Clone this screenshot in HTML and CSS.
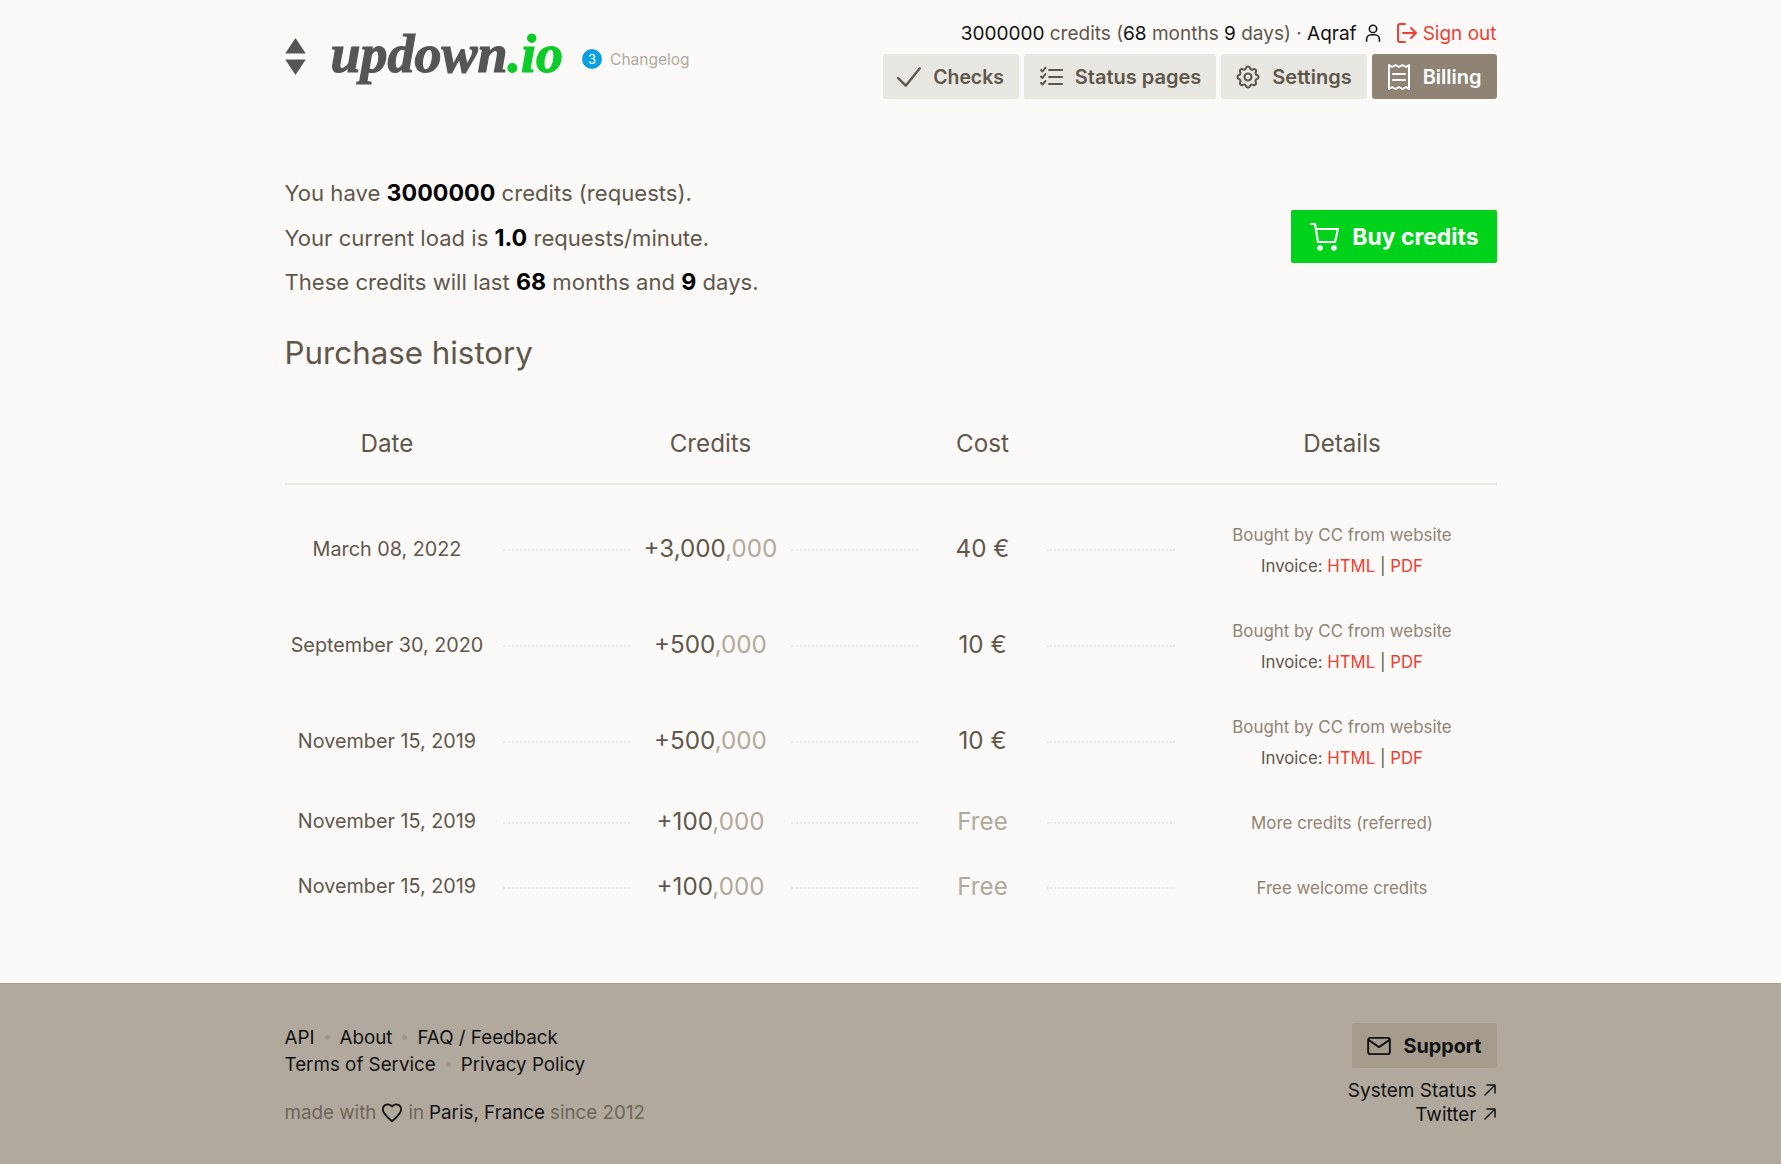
FILE: index.html
```html
<!DOCTYPE html>
<html lang="en">
<head>
<meta charset="utf-8">
<title>updown.io - Billing</title>
<link rel="stylesheet" href="styles.css">
</head>
<body>
<div class="page">
  <header class="header">
    <div class="brand">
      <svg class="brand-arrows" viewBox="0 0 20 36" width="21" height="37"><path d="M10 0 L20 15 H0 Z M0 21 H20 L10 36 Z" fill="#555"/></svg>
      <a class="logo">updown<span class="logo-tld">.io</span></a>
      <a class="changelog"><span class="badge">3</span>Changelog</a>
    </div>
    <div class="header-right">
      <div class="account">
        <span><b class="dark">3000000</b> credits (<b class="dark">68</b> months <b class="dark">9</b> days) · <b class="dark">Aqraf</b></span>
        <svg class="ico-user" viewBox="0 0 24 24" width="22" height="22" fill="none" stroke="#111" stroke-width="1.700" stroke-linecap="round" stroke-linejoin="round"><circle cx="12" cy="7.500" r="4"/><path d="M5 21v-2a5 5 0 0 1 5-5h4a5 5 0 0 1 5 5v2"/></svg>
        <a class="signout"><svg viewBox="0 0 24 24" width="24" height="24" fill="none" stroke="#f03e33" stroke-width="2" stroke-linecap="round" stroke-linejoin="round"><path d="M10 3H5a2 2 0 0 0-2 2v14a2 2 0 0 0 2 2h5"/><path d="M8 12h13M16 7l5 5-5 5"/></svg>Sign out</a>
      </div>
      <nav class="nav">
        <a class="nav-btn nav-btn-check"><svg viewBox="0 0 24 24" width="26" height="28" fill="none" stroke="#5f574b" stroke-width="2.200" stroke-linecap="round" stroke-linejoin="round"><path d="M2 13l7 7L22 4"/></svg>Checks</a>
        <a class="nav-btn"><svg viewBox="0 0 28 28" width="28" height="28" fill="none" stroke="#5f574b" stroke-width="2" stroke-linecap="round" stroke-linejoin="round"><path d="M4 7l1.500 1.500L8.500 4.500M4 13.500l1.500 1.500L8.500 11M4 20l1.500 1.500L8.500 18M12 7h13M12 14h13M12 21h13"/></svg>Status pages</a>
        <a class="nav-btn"><svg viewBox="0 0 24 24" width="28" height="28" fill="none" stroke="#5f574b" stroke-width="1.800" stroke-linecap="round" stroke-linejoin="round"><path d="M10.300 4.300c.4-1.800 3-1.800 3.400 0a1.700 1.700 0 0 0 2.600 1.100c1.500-.9 3.300.8 2.400 2.400a1.700 1.700 0 0 0 1 2.500c1.800.4 1.800 3 0 3.400a1.700 1.700 0 0 0-1 2.600c.9 1.500-.9 3.300-2.400 2.400a1.700 1.700 0 0 0-2.600 1c-.4 1.800-3 1.800-3.400 0a1.700 1.700 0 0 0-2.600-1c-1.500.9-3.300-.9-2.400-2.400a1.700 1.700 0 0 0-1-2.600c-1.800-.4-1.800-3 0-3.400a1.700 1.700 0 0 0 1-2.500c-.9-1.600.9-3.300 2.400-2.400 1 .6 2.300.1 2.600-1.100z"/><circle cx="12" cy="12" r="3"/></svg>Settings</a>
        <a class="nav-btn nav-btn-active"><svg viewBox="0 0 28 28" width="28" height="28" fill="none" stroke="#fff" stroke-width="2" stroke-linecap="round" stroke-linejoin="round"><path d="M4 26V2l3 2 3.500-2L14 4l3.500-2L21 4l3-2v24l-3-2-3.500 2L14 24l-3.500 2L7 24z"/><path d="M8 11h12M8 17h12"/></svg>Billing</a>
      </nav>
    </div>
  </header>

  <section class="summary">
    <div class="summary-text">
      <p>You have <b>3000000</b> credits (requests).</p>
      <p>Your current load is <b>1.0</b> requests/minute.</p>
      <p>These credits will last <b>68</b> months and <b>9</b> days.</p>
    </div>
    <a class="buy"><svg viewBox="0 0 32 32" width="32" height="32" fill="none" stroke="#fff" stroke-width="2.200" stroke-linecap="round" stroke-linejoin="round"><path d="M2 3h4l3 18h17l3-13H7"/><circle cx="11" cy="27" r="1.700" fill="#fff"/><circle cx="25" cy="27" r="1.700" fill="#fff"/></svg>Buy credits</a>
  </section>

  <h2 class="title">Purchase history</h2>

  <div class="table">
    <div class="row row-head">
      <div class="c-date">Date</div><div></div><div class="c-num">Credits</div><div></div><div class="c-num">Cost</div><div></div><div class="c-det">Details</div>
    </div>
    <div class="row row-tall">
      <div class="c-date">March 08, 2022</div><i class="dots"></i><div class="c-num">+3,000<span class="mute">,000</span></div><i class="dots"></i><div class="c-num">40 €</div><i class="dots"></i>
      <div class="c-det"><div class="det-note">Bought by CC from website</div><div class="det-inv">Invoice: <a>HTML</a> | <a>PDF</a></div></div>
    </div>
    <div class="row row-tall">
      <div class="c-date">September 30, 2020</div><i class="dots"></i><div class="c-num">+500<span class="mute">,000</span></div><i class="dots"></i><div class="c-num">10 €</div><i class="dots"></i>
      <div class="c-det"><div class="det-note">Bought by CC from website</div><div class="det-inv">Invoice: <a>HTML</a> | <a>PDF</a></div></div>
    </div>
    <div class="row row-tall">
      <div class="c-date">November 15, 2019</div><i class="dots"></i><div class="c-num">+500<span class="mute">,000</span></div><i class="dots"></i><div class="c-num">10 €</div><i class="dots"></i>
      <div class="c-det"><div class="det-note">Bought by CC from website</div><div class="det-inv">Invoice: <a>HTML</a> | <a>PDF</a></div></div>
    </div>
    <div class="row row-short">
      <div class="c-date">November 15, 2019</div><i class="dots"></i><div class="c-num">+100<span class="mute">,000</span></div><i class="dots"></i><div class="c-num mute">Free</div><i class="dots"></i>
      <div class="c-det"><div class="det-note">More credits (referred)</div></div>
    </div>
    <div class="row row-short">
      <div class="c-date">November 15, 2019</div><i class="dots"></i><div class="c-num">+100<span class="mute">,000</span></div><i class="dots"></i><div class="c-num mute">Free</div><i class="dots"></i>
      <div class="c-det"><div class="det-note">Free welcome credits</div></div>
    </div>
  </div>
</div>

<footer class="footer">
  <div class="footer-in">
    <div class="foot-left">
      <div class="foot-links"><a>API</a><i class="sep"></i><a>About</a><i class="sep"></i><a>FAQ / Feedback</a></div>
      <div class="foot-links"><a>Terms of Service</a><i class="sep"></i><a>Privacy Policy</a></div>
      <div class="made">made with <svg viewBox="0 0 24 24" width="22" height="22" fill="none" stroke="#111" stroke-width="2" stroke-linejoin="round"><path d="M12 21C7 16.500 2 13 2 8a5.500 5.500 0 0 1 10-3 5.500 5.500 0 0 1 10 3c0 5-5 8.500-10 13z"/></svg> in <a>Paris, France</a> since 2012</div>
    </div>
    <div class="foot-right">
      <a class="support"><svg viewBox="0 0 24 24" width="26" height="26" fill="none" stroke="#111" stroke-width="1.800" stroke-linecap="round" stroke-linejoin="round"><rect x="2" y="4.500" width="20" height="15" rx="2"/><path d="M2.500 6.500L12 13l9.500-6.500"/></svg>Support</a>
      <a class="ext">System Status <svg viewBox="0 0 14 14" width="14" height="14" fill="none" stroke="#111" stroke-width="1.500" stroke-linecap="round" stroke-linejoin="round"><path d="M2 12L12 2M4 2h8v8"/></svg></a>
      <a class="ext">Twitter <svg viewBox="0 0 14 14" width="14" height="14" fill="none" stroke="#111" stroke-width="1.500" stroke-linecap="round" stroke-linejoin="round"><path d="M2 12L12 2M4 2h8v8"/></svg></a>
    </div>
  </div>
</footer>
</body>
</html>
```
FILE: styles.css
```css
* { box-sizing: border-box; }
html, body { margin: 0; padding: 0; }
body {
  background: #fcfaf8;
  color: #5f574b;
  font-family: Inter, "Liberation Sans", sans-serif;
  font-size: 22.100px;
  min-height: 1164px;
  display: flex;
  flex-direction: column;
}
.page { width: 1212px; margin: 0 auto; flex: 1; }
b { font-weight: 700; color: #000; font-size: 23.200px; }

.header { display: flex; justify-content: space-between; align-items: flex-start; height: 99px; }
.brand { display: flex; align-items: center; height: 60px; margin-top: 27px; }
.brand-arrows { flex: none; margin-top: -1px; }
.logo {
  font-family: "Liberation Serif", serif;
  font-style: italic;
  font-weight: 700;
  font-size: 54px;
  color: #555;
  margin-left: 25px;
  line-height: 60px;
  margin-top: -7px;
  -webkit-text-stroke: 1.200px currentColor;
}
.logo-tld { color: #0ccc2a; }
.changelog { display: flex; align-items: center; gap: 8px; margin-left: 19px; margin-top: 4px; font-size: 15.500px; color: #b1a99d; }
.badge {
  width: 20px; height: 20px; border-radius: 50%;
  background: #0a9fe0; color: #fff; font-size: 13px;
  display: flex; align-items: center; justify-content: center;
}

.header-right { display: flex; flex-direction: column; align-items: flex-end; }
.account { display: flex; align-items: center; height: 24px; margin-top: 21px; font-size: 19px; white-space: nowrap; }
.account .dark { font-weight: 400; font-size: 19px; color: #111; }
.ico-user { margin-left: 5px; }
.signout { display: flex; align-items: center; gap: 4px; margin-left: 11px; color: #f03e33; }
.nav { display: flex; gap: 5px; margin-top: 9px; }
.nav-btn {
  display: flex; align-items: center; gap: 10px;
  height: 45px; padding: 0 15px 0 13px;
  background: #e8e7e2; border-radius: 3px;
  font-size: 20px; font-weight: 600; color: #5f574b;
}
.nav-btn-check { padding-left: 13px; gap: 11px; font-size: 19.400px; }
.nav-btn-active { background: #8e8374; color: #fff; }

.summary { display: flex; justify-content: space-between; align-items: center; margin-top: 72px; }
.summary p { margin: 0; height: 44.500px; line-height: 44.500px; }
.buy {
  display: flex; align-items: center; gap: 11px;
  height: 53px; padding: 0 18px; margin-bottom: 2px;
  background: #00d11b; border-radius: 2px;
  color: #fff; font-size: 22.900px; font-weight: 700;
}

.title { font-size: 31.300px; font-weight: 400; line-height: 40px; margin: 28px 0 0; color: #5f574b; }

.table { margin-top: 40px; }
.row {
  display: grid;
  grid-template-columns: 218px 127px 161px 127px 129px 128px 322px;
  align-items: center;
  text-align: center;
}
.row-head { height: 72px; margin-bottom: 16px; border-bottom: 2px solid #e8e7e2; align-items: start; padding-top: 16px; }
.row-tall { height: 96px; }
.row-short { height: 65px; }
.c-date { padding-right: 13px; font-size: 19.800px; }
.c-num { font-size: 24.200px; padding-left: 1px; }
.row-head .c-date, .row-head .c-det { font-size: 24.200px; }
.c-det { padding-left: 13px; padding-top: 4px; }
.row-head .c-det { padding-top: 0; color: #5f574b; }
.det-note { font-size: 16.900px; line-height: 31px; color: #8e8374; }
.det-inv { font-size: 16.800px; line-height: 31px; color: #5f574b; }
.det-inv a { color: #f03e33; }
.mute { color: #b1a99d; }
.dots { display: block; border-top: 2px dotted #e8e7e2; margin-top: 3px; }

.footer { background: #b1a99d; height: 181px; border-top: 1px solid #a59c8e; }
.footer-in { width: 1212px; margin: 0 auto; display: flex; justify-content: space-between; color: #5f574b; }
.foot-left { padding-top: 40px; font-size: 18.800px; }
.foot-links { display: flex; align-items: center; height: 27px; color: #111; }
.sep { width: 5px; height: 5px; border-radius: 50%; background: #a09789; margin: 0 10px; }
.made { display: flex; align-items: center; gap: 5px; margin-top: 21px; height: 27px; color: #6d6559; }
.made a { color: #111; }
.foot-right { padding-top: 39px; display: flex; flex-direction: column; align-items: flex-end; font-size: 19px; color: #111; }
.support {
  display: flex; align-items: center; gap: 11px;
  height: 45px; padding: 0 15px 0 14px;
  background: #a59c8e; border-radius: 2px;
  font-size: 19.800px; font-weight: 700; margin-bottom: 10px;
}
.ext { display: flex; align-items: center; gap: 6px; height: 24px; }
```
